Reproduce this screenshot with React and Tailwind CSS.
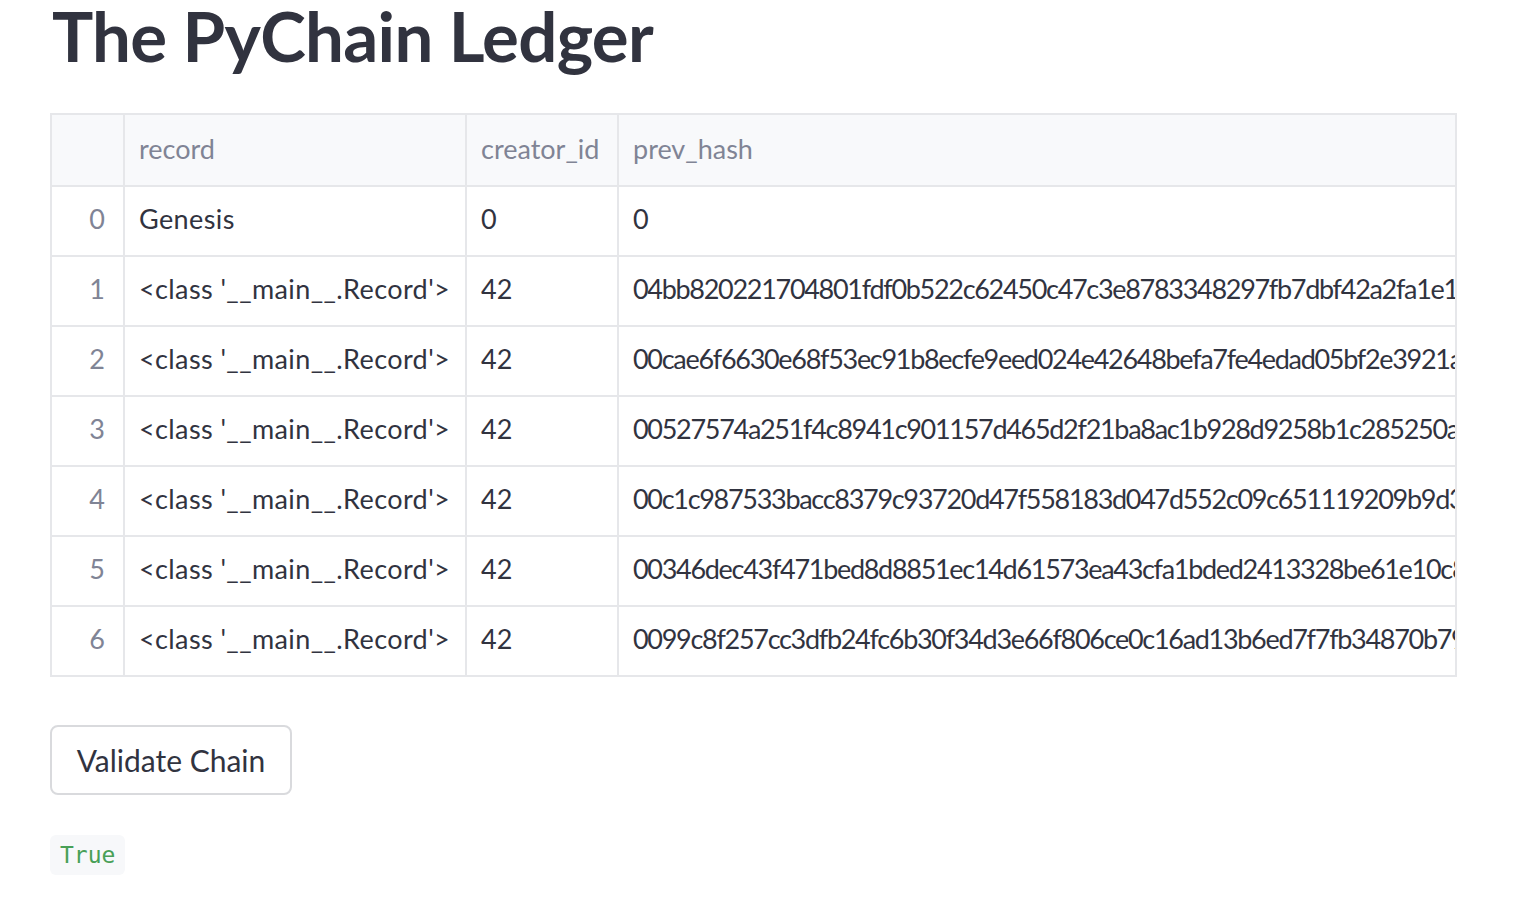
import React from "react";

const rows = [
  ["0", "Genesis", "0", "0"],
  ["1", "<class '__main__.Record'>", "42", "04bb820221704801fdf0b522c62450c47c3e8783348297fb7dbf42a2fa1e1c5d3a9b"],
  ["2", "<class '__main__.Record'>", "42", "00cae6f6630e68f53ec91b8ecfe9eed024e42648befa7fe4edad05bf2e3921a7c4d2"],
  ["3", "<class '__main__.Record'>", "42", "00527574a251f4c8941c901157d465d2f21ba8ac1b928d9258b1c285250ab3e61f"],
  ["4", "<class '__main__.Record'>", "42", "00c1c987533bacc8379c93720d47f558183d047d552c09c651119209b9d37e2f0a"],
  ["5", "<class '__main__.Record'>", "42", "00346dec43f471bed8d8851ec14d61573ea43cfa1bded2413328be61e10c8a5d4e"],
  ["6", "<class '__main__.Record'>", "42", "0099c8f257cc3dfb24fc6b30f34d3e66f806ce0c16ad13b6ed7f7fb34870b79e2c"],
];

const font = { fontFamily: "Lato, 'Noto Sans', sans-serif" };

export default function App() {
  return (
    <div className="min-h-[905px] w-[1523px] bg-white text-[#31333F] pl-[50px] flex flex-col" style={font}>
      <div className="h-[113px] flex flex-col">
        <h1 className="text-[69px] font-bold leading-[84px] -mt-[6px] pl-[2px] tracking-[-0.7px]">
          The PyChain Ledger
        </h1>
      </div>
      <div className="w-[1407px] border-2 border-[#e6e7ea] text-[27px]">
        <div className="grid grid-cols-[73px_342px_152px_1fr] h-[72px] border-b-2 border-[#e6e7ea] bg-[#f8f9fb] text-[#808495]">
          <div className="border-r-2 border-[#e6e7ea]"></div>
          <div className="border-r-2 border-[#e6e7ea] flex items-center pl-[14px] pb-[2px]">record</div>
          <div className="border-r-2 border-[#e6e7ea] flex items-center pl-[14px] pb-[2px]">creator_id</div>
          <div className="flex items-center pl-[14px] pb-[2px]">prev_hash</div>
        </div>
        {rows.map((r, i) => (
          <div
            key={i}
            className={
              i < rows.length - 1
                ? "grid grid-cols-[73px_342px_152px_1fr] h-[70px] border-b-2 border-[#e6e7ea]"
                : "grid grid-cols-[73px_342px_152px_1fr] h-[68px]"
            }
          >
            <div className="border-r-2 border-[#e6e7ea] flex items-center justify-end pr-[18px] pb-[3px] text-[#808495]">{r[0]}</div>
            <div className="border-r-2 border-[#e6e7ea] flex items-center pl-[14px] pb-[3px] whitespace-nowrap overflow-hidden tracking-[0.4px]">{r[1]}</div>
            <div className="border-r-2 border-[#e6e7ea] flex items-center pl-[14px] pb-[3px]">{r[2]}</div>
            <div className="flex items-center pl-[14px] pb-[3px] whitespace-nowrap overflow-hidden tracking-[-1.3px]">{r[3]}</div>
          </div>
        ))}
      </div>
      <div className="pt-[48px]">
        <button className="w-[242px] h-[70px] border-2 border-[#d9dadd] rounded-[8px] text-[30px] text-[#31333F] bg-white">
          Validate Chain
        </button>
      </div>
      <div className="pt-[40px]">
        <span
          className="inline-flex items-center h-[40px] px-[10px] rounded-[6px] bg-[#f7f8fa] text-[#48a057] text-[23px]"
          style={{ fontFamily: "'DejaVu Sans Mono', 'Liberation Mono', monospace" }}
        >
          True
        </span>
      </div>
    </div>
  );
}
